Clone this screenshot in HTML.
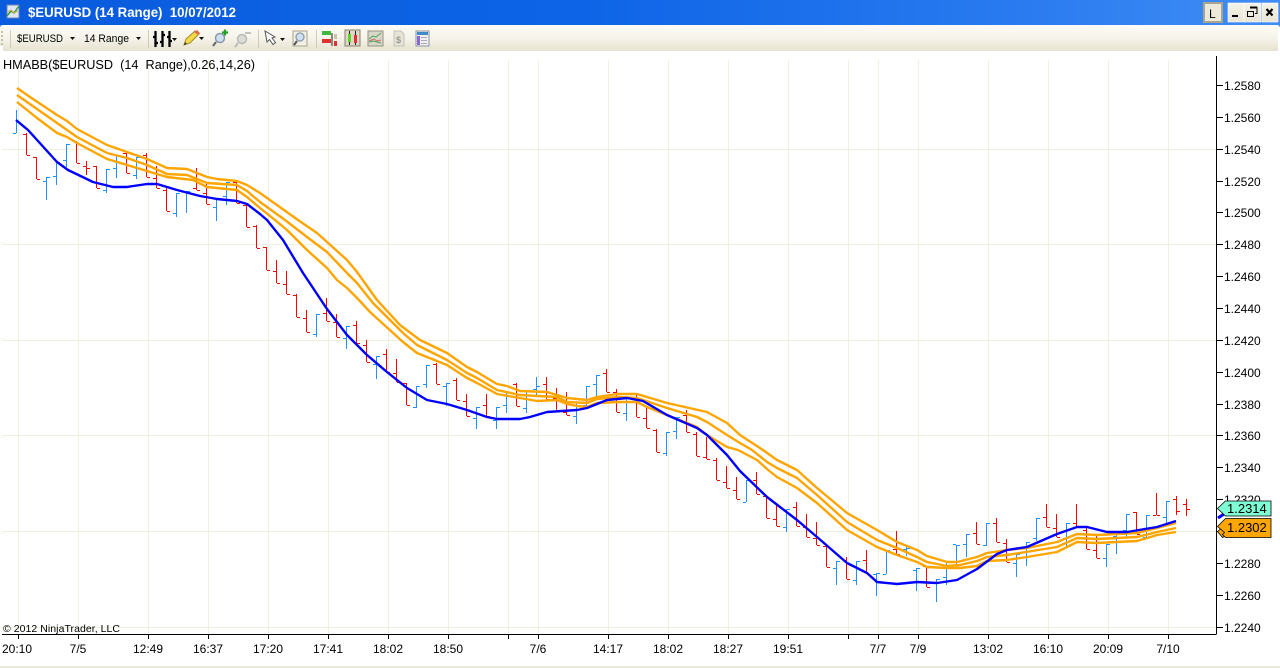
<!DOCTYPE html>
<html><head><meta charset="utf-8"><style>
html,body{margin:0;padding:0;background:#fff;width:1280px;height:668px;overflow:hidden}
svg{display:block;font-family:"Liberation Sans",sans-serif}
text{white-space:pre}
</style></head><body>
<svg width="1280" height="668" viewBox="0 0 1280 668" xmlns="http://www.w3.org/2000/svg">
<defs>
<linearGradient id="tb" x1="0" x2="1" y1="0" y2="0"><stop offset="0" stop-color="#0a5bdd"/><stop offset=".45" stop-color="#0d64e6"/><stop offset=".8" stop-color="#2a7bf0"/><stop offset="1" stop-color="#3f8df5"/></linearGradient>
<linearGradient id="tool" x1="0" x2="0" y1="0" y2="1"><stop offset="0" stop-color="#fcfbf7"/><stop offset=".5" stop-color="#f6f4ea"/><stop offset="1" stop-color="#e6e2d0"/></linearGradient>
<linearGradient id="btn" x1="0" x2="0" y1="0" y2="1"><stop offset="0" stop-color="#f5f3e8"/><stop offset="1" stop-color="#e8e5d5"/></linearGradient>
</defs>
<rect width="1280" height="668" fill="#fff"/>
<rect width="1280" height="25" fill="url(#tb)"/>
<rect y="25" width="1280" height="26" fill="#3f8df5"/>
<rect x="0" y="25" width="1280" height="26" rx="3" fill="url(#tool)"/>
<rect x="0" y="46" width="3" height="5" fill="#fff"/>
<rect x="1278" y="27" width="2" height="24" fill="#fff"/>
<text x="28" y="17" font-size="13.500" font-weight="bold" fill="#fff" textLength="208" lengthAdjust="spacingAndGlyphs">$EURUSD (14 Range)  10/07/2012</text>
<!-- app icon -->
<rect x="7" y="5" width="12" height="13" fill="#dfe6f2" stroke="#6c85b5"/>
<path d="M7 16l4-5 3 2 5-7" fill="none" stroke="#3a9a4a" stroke-width="1.500"/>
<path d="M8 12l3-2 3 3 4-2" fill="none" stroke="#c9b040"/>
<!-- window buttons -->
<rect x="1204" y="3" width="18" height="19" fill="#ece9d8" stroke="#a8a490" stroke-width="2"/>
<text x="1209" y="18" font-size="12" fill="#000">L</text>
<rect x="1228" y="3" width="16" height="19" fill="url(#btn)" stroke="#fff" stroke-width=".6"/>
<rect x="1244" y="3" width="17" height="19" fill="url(#btn)" stroke="#fff" stroke-width=".6"/>
<rect x="1262" y="3" width="16" height="19" fill="url(#btn)" stroke="#fff" stroke-width=".6"/>
<rect x="1232" y="15" width="6" height="2" fill="#000"/>
<path d="M1250 7.500h7v6h-2M1247.500 11.500h6v5h-6z" fill="none" stroke="#000"/>
<path d="M1250 7.500h7" stroke="#000" stroke-width="2"/>
<path d="M1266.500 9l6 6.500M1272.500 9l-6 6.500" stroke="#000" stroke-width="2.200"/>
<!-- toolbar -->
<path d="M2 31v2M2 35v2M2 39v2M2 43v2" stroke="#c4c0ab" stroke-width="2"/>
<path d="M10.500 30v18M148.500 30v18M258.500 30v18M316.500 30v18" stroke="#cfcbb8"/>
<text x="17" y="42" font-size="11" fill="#000" textLength="46" lengthAdjust="spacingAndGlyphs">$EURUSD</text>
<path d="M70 37h5l-2.500 3z" fill="#111"/>
<text x="84" y="42" font-size="11" fill="#000" textLength="45" lengthAdjust="spacingAndGlyphs">14 Range</text>
<path d="M136 37h5l-2.500 3z" fill="#111"/>
<path d="M155.500 31v16M153 37h2M155 43h3M162.500 31v16M160 42h2M162 35h3M169.500 31v16M167 37h2M169 41h3" stroke="#000" stroke-width="2.300" fill="none"/>
<path d="M172 38h5l-2.500 3z" fill="#111"/>
<path d="M184 45l2-6 9-8 4 3-9 9z" fill="#f6d84a" stroke="#a08a20"/>
<path d="M184 45l1-3 2 2z" fill="#333"/><path d="M194 32l3-2 3 3-2 2z" fill="#e06a50"/>
<path d="M199 37h5l-2.500 3z" fill="#111"/>
<circle cx="220" cy="38" r="4.500" fill="#cfe0f2" stroke="#8a9aa8" stroke-width="1.500"/><path d="M216 42l-3 4" stroke="#666" stroke-width="2"/>
<path d="M222 32.500h6M225 29.500v6" stroke="#1fa21f" stroke-width="2.200"/>
<circle cx="242" cy="39" r="4.500" fill="#dcdcd4" stroke="#bbb" stroke-width="1.500"/><path d="M238 43l-3 4" stroke="#bbb" stroke-width="2"/>
<path d="M245 33h6" stroke="#c4c4bc" stroke-width="2"/>
<path d="M265 31l2 11 2.500-2.500 3.500 5 2.500-2-3.500-4.500 3-1z" fill="#fff" stroke="#555"/>
<path d="M280 38h5l-2.500 3z" fill="#111"/>
<rect x="293" y="31" width="14" height="15" fill="#f2f0e4" stroke="#a8a490"/>
<circle cx="300" cy="37" r="4" fill="#cfe0f2" stroke="#8a9aa8" stroke-width="1.300"/><path d="M297 41l-3 4" stroke="#555" stroke-width="2"/>
<rect x="322" y="31" width="9" height="4" fill="#3fb83f"/><rect x="322" y="39" width="9" height="4" fill="#e03030"/>
<rect x="331" y="33" width="2" height="13" fill="#8a8a7a"/><rect x="334" y="41" width="3" height="5" fill="#e03030"/><rect x="334" y="34" width="3" height="5" fill="#c8c4b0"/>
<rect x="345" y="30" width="15" height="16" fill="#ddd9c6" stroke="#85816e"/>
<path d="M349.500 31v14M355.500 31v14" stroke="#222"/><rect x="348" y="34" width="3" height="8" fill="#5fd02a"/><rect x="354" y="35" width="3" height="8" fill="#e63030"/>
<rect x="368" y="31" width="15" height="15" fill="#d8d6c8" stroke="#97937f"/>
<path d="M369 39l4-3 3 1 5-4M369 42l4-1 4 1 4 1" fill="none" stroke="#4aa65a"/><path d="M369 41l5-2 3 2 4-1" fill="none" stroke="#d06a6a"/>
<path d="M394 31h7l3 3v12h-10z" fill="#e6e4d8" stroke="#c4c2b4"/>
<text x="396" y="43" font-size="9" font-weight="bold" fill="#9c9a8c">$</text>
<rect x="416" y="31" width="13" height="15" fill="#f0f0ee" stroke="#8a93a5"/>
<rect x="417" y="32" width="11" height="3" fill="#3f8ac8"/><rect x="417" y="36" width="3" height="9" fill="#8a6ad0"/>
<path d="M421 37.500h6M421 40.500h6M421 43.500h6" stroke="#aab" />
<!-- grid -->
<g stroke="#f1efdf" fill="none" shape-rendering="crispEdges">
<path d="M2 149.500H1216M2 244.500H1216M2 340.500H1216M2 435.500H1216M2 531.500H1216M2 627.500H1216"/>
<path d="M18.500 60V634M78.500 60V634M148.500 60V634M208.500 60V634M268.500 60V634M328.500 60V634M388.500 60V634M448.500 60V634M508.500 60V634M538.500 60V634M608.500 60V634M668.500 60V634M728.500 60V634M788.500 60V634M848.500 60V634M878.500 60V634M918.500 60V634M988.500 60V634M1048.500 60V634M1108.500 60V634M1168.500 60V634"/>
</g>
<!-- red bars -->
<path fill="none" stroke="#ff0000" shape-rendering="crispEdges" d="M26.500 133V155M23 134.500h3M27 155.500h3M36.500 157V179M33 157.500h3M37 179.500h3M76.500 141V163M73 141.500h3M77 163.500h3M86.500 161V175M83 166.500h3M87 168.500h3M96.500 166V188M93 166.500h3M97 188.500h3M126.500 151V173M123 153.500h3M127 173.500h3M146.500 153V177M143 155.500h3M147 177.500h3M156.500 166V188M153 178.500h3M157 188.500h3M166.500 188V211M163 190.500h3M167 211.500h3M196.500 168V190M193 188.500h3M197 190.500h3M206.500 182V204M203 193.500h3M207 204.500h3M236.500 182V203M233 182.500h3M237 203.500h3M246.500 205V227M243 205.500h3M247 227.500h3M256.500 225V248M253 226.500h3M257 248.500h3M266.500 247V270M263 247.500h3M267 270.500h3M276.500 260V283M273 271.500h3M277 283.500h3M286.500 271V294M283 284.500h3M287 294.500h3M296.500 294V317M293 295.500h3M297 317.500h3M306.500 310V332M303 318.500h3M307 332.500h3M326.500 298V321M323 313.500h3M327 321.500h3M336.500 314V337M333 322.500h3M337 337.500h3M356.500 321V343M353 325.500h3M357 343.500h3M366.500 340V362M363 345.500h3M367 362.500h3M386.500 349V372M383 354.500h3M387 372.500h3M396.500 359V382M393 373.500h3M397 382.500h3M406.500 383V405M403 383.500h3M407 405.500h3M436.500 363V384M433 364.500h3M437 384.500h3M456.500 378V400M453 380.500h3M457 400.500h3M466.500 394V416M463 401.500h3M467 416.500h3M486.500 394V416M483 405.500h3M487 416.500h3M516.500 383V406M513 384.500h3M517 406.500h3M546.500 377V399M543 384.500h3M547 399.500h3M556.500 388V411M553 398.500h3M557 411.500h3M566.500 392V415M563 412.500h3M567 415.500h3M606.500 369V392M603 373.500h3M607 392.500h3M616.500 389V412M613 392.500h3M617 412.500h3M636.500 394V417M633 398.500h3M637 417.500h3M646.500 406V428M643 418.500h3M647 428.500h3M656.500 429V452M653 430.500h3M657 452.500h3M686.500 410V432M683 415.500h3M687 432.500h3M696.500 432V456M693 434.500h3M697 456.500h3M706.500 437V459M703 457.500h3M707 459.500h3M716.500 458V480M713 460.500h3M717 480.500h3M726.500 466V488M723 482.500h3M727 488.500h3M736.500 477V499M733 490.500h3M737 499.500h3M756.500 472V494M753 480.500h3M757 494.500h3M766.500 496V518M763 496.500h3M767 518.500h3M776.500 503V526M773 519.500h3M777 526.500h3M796.500 502V526M793 507.500h3M797 526.500h3M806.500 514V537M803 527.500h3M807 537.500h3M816.500 522V545M813 538.500h3M817 545.500h3M826.500 545V567M823 546.500h3M827 567.500h3M846.500 557V579M843 560.500h3M847 579.500h3M866.500 550V574M863 560.500h3M867 574.500h3M896.500 531V554M893 549.500h3M897 554.500h3M926.500 566V587M923 566.500h3M927 587.500h3M976.500 522V544M973 533.500h3M977 544.500h3M996.500 518V542M993 523.500h3M997 542.500h3M1006.500 539V562M1003 543.500h3M1007 562.500h3M1046.500 504V527M1043 517.500h3M1047 527.500h3M1056.500 514V537M1053 528.500h3M1057 537.500h3M1076.500 504V527M1073 523.500h3M1077 527.500h3M1086.500 528V549M1083 530.500h3M1087 549.500h3M1096.500 534V558M1093 550.500h3M1097 558.500h3M1136.500 512V534M1133 512.500h3M1137 534.500h3M1156.500 493V515M1153 515.500h3M1157 515.500h3M1176.500 496V515M1173 499.500h3M1177 511.500h3M1186.500 499V516M1183 504.500h3M1187 509.500h3"/>
<!-- blue bars -->
<path fill="none" stroke="#1e90ff" shape-rendering="crispEdges" d="M16.500 110V133M13 133.500h3M46.500 177V200M43 181.500h3M47 177.500h3M56.500 162V185M53 176.500h3M57 162.500h3M66.500 144V167M63 160.500h3M67 144.500h3M106.500 169V193M103 190.500h3M107 169.500h3M116.500 155V178M113 168.500h3M117 155.500h3M136.500 157V179M133 175.500h3M137 157.500h3M176.500 193V217M173 213.500h3M177 193.500h3M186.500 191V213M183 191.500h3M187 191.500h3M216.500 198V221M213 207.500h3M217 198.500h3M226.500 182V205M223 196.500h3M227 182.500h3M316.500 314V337M313 334.500h3M317 314.500h3M346.500 326V349M343 338.500h3M347 326.500h3M376.500 356V379M373 364.500h3M377 356.500h3M416.500 386V408M413 407.500h3M417 386.500h3M426.500 365V388M423 384.500h3M427 365.500h3M446.500 383V406M443 386.500h3M447 383.500h3M476.500 407V429M473 418.500h3M477 407.500h3M496.500 407V429M493 420.500h3M497 407.500h3M506.500 392V413M503 405.500h3M507 392.500h3M526.500 391V413M523 408.500h3M527 391.500h3M536.500 377V397M533 389.500h3M537 386.500h3M576.500 402V424M573 416.500h3M577 402.500h3M586.500 386V408M583 405.500h3M587 386.500h3M596.500 375V397M593 384.500h3M597 375.500h3M626.500 398V421M623 413.500h3M627 398.500h3M666.500 432V456M663 453.500h3M667 432.500h3M676.500 417V439M673 431.500h3M677 417.500h3M746.500 480V502M743 502.500h3M747 480.500h3M786.500 509V532M783 527.500h3M787 509.500h3M836.500 561V585M833 568.500h3M837 561.500h3M856.500 561V585M853 580.500h3M857 561.500h3M876.500 573V596M873 574.500h3M877 573.500h3M886.500 550V574M883 574.500h3M887 550.500h3M906.500 547V556M903 549.500h3M907 548.500h3M916.500 568V591M913 570.500h3M917 568.500h3M936.500 579V602M933 583.500h3M937 579.500h3M946.500 562V585M943 577.500h3M947 562.500h3M956.500 545V568M953 544.500h3M957 545.500h3M966.500 534V557M963 544.500h3M967 534.500h3M986.500 523V546M983 545.500h3M987 523.500h3M1016.500 554V577M1013 563.500h3M1017 554.500h3M1026.500 542V566M1023 552.500h3M1027 542.500h3M1036.500 518V541M1033 538.500h3M1037 518.500h3M1066.500 523V546M1063 538.500h3M1067 523.500h3M1106.500 544V567M1103 558.500h3M1107 544.500h3M1116.500 531V554M1113 536.500h3M1117 531.500h3M1126.500 514V537M1123 530.500h3M1127 514.500h3M1146.500 515V537M1143 537.500h3M1147 515.500h3M1166.500 501V523M1163 517.500h3M1167 501.500h3"/>
<!-- orange bands -->
<g fill="none" stroke="#ffa500" stroke-width="2.400" stroke-linejoin="round">
<polyline points="17,88 30,97 57,115 67,121 77,129 107,145 127,152 147,159 167,168 187,169 207,177 217,179 237,181 247,185 260,193 298,220 317,233 347,260 357,272 377,300 400,325 420,340 447,353 467,367 477,372 497,384 507,386 520,391 547,392 567,398 587,400 597,397 617,394 637,394 667,403 707,412 727,423 740,435 763,450 777,460 797,470 817,488 847,513 877,530 897,542 917,550 927,556 947,562 957,562 977,557 987,553 1007,550 1027,548 1057,542 1077,534 1097,535 1137,533 1157,528 1176,523"/>
<polyline points="17,95 57,123 77,137 107,153 127,158 147,165 167,174 187,175 207,183 237,185 247,191 260,202 285,220 307,237 327,252 347,273 357,283 373,303 403,333 417,345 447,360 467,373 477,378 497,390 520,395 537,396 557,397 567,402 587,403 597,399 617,397 637,398 667,408 697,417 707,422 727,435 740,443 752,450 767,462 777,468 797,478 817,495 847,522 877,540 897,548 917,557 927,562 947,566 960,565 977,561 987,557 1007,555 1057,547 1077,538 1097,539 1137,537 1157,532 1176,528"/>
<polyline points="17,102 37,118 57,133 67,137 77,143 107,159 147,171 167,177 193,180 207,187 237,190 247,197 260,208 275,220 287,230 307,250 327,268 337,280 347,288 357,298 370,312 403,342 417,353 447,365 467,378 477,383 497,394 520,398 537,401 557,400 567,404 577,406 587,407 597,403 617,402 637,402 647,407 667,415 697,427 707,435 727,447 738,450 757,460 767,469 777,477 797,488 817,503 847,530 877,547 897,555 917,562 927,567 947,568 960,568 977,566 987,561 1007,560 1027,557 1057,552 1077,542 1097,543 1137,541 1157,535 1176,532"/>
</g>
<polyline fill="none" stroke="#0000ff" stroke-width="2.400" stroke-linejoin="round" points="16,120 28,130 57,162 68,170 93,182 113,187 127,187 147,184 157,184 177,190 200,196 217,199 237,201 247,204 260,214 267,220 283,240 303,273 327,309 347,335 367,355 387,372 407,388 427,400 447,404 467,410 487,417 497,419 520,419 530,417 547,412 577,410 587,408 607,400 627,398 643,401 667,415 697,428 707,435 727,455 740,471 767,497 797,520 817,537 847,563 867,573 877,582 897,584 917,582 937,583 957,580 977,569 997,554 1007,550 1027,547 1057,534 1077,527 1087,527 1107,532 1127,532 1157,527 1176,521"/>
<!-- axes -->
<g stroke="#000" fill="none" shape-rendering="crispEdges">
<path d="M2 634.500H1216.500M1216.500 56V634"/>
<path d="M1217 85.500h6M1217 117.500h6M1217 149.500h6M1217 181.500h6M1217 212.500h6M1217 244.500h6M1217 276.500h6M1217 308.500h6M1217 340.500h6M1217 372.500h6M1217 404.500h6M1217 435.500h6M1217 467.500h6M1217 499.500h6M1217 531.500h6M1217 563.500h6M1217 595.500h6M1217 627.500h6"/>
<path d="M18.500 635v4M78.500 635v4M148.500 635v4M208.500 635v4M268.500 635v4M328.500 635v4M388.500 635v4M448.500 635v4M508.500 635v4M538.500 635v4M608.500 635v4M668.500 635v4M728.500 635v4M788.500 635v4M848.500 635v4M878.500 635v4M918.500 635v4M988.500 635v4M1048.500 635v4M1108.500 635v4M1168.500 635v4"/>
</g>
<g font-size="12" fill="#000">
<text x="1224" y="90">1.2580</text><text x="1224" y="122">1.2560</text><text x="1224" y="154">1.2540</text><text x="1224" y="186">1.2520</text><text x="1224" y="217">1.2500</text><text x="1224" y="249">1.2480</text><text x="1224" y="281">1.2460</text><text x="1224" y="313">1.2440</text><text x="1224" y="345">1.2420</text><text x="1224" y="377">1.2400</text><text x="1224" y="409">1.2380</text><text x="1224" y="440">1.2360</text><text x="1224" y="472">1.2340</text><text x="1224" y="504">1.2320</text><text x="1224" y="568">1.2280</text><text x="1224" y="600">1.2260</text><text x="1224" y="632">1.2240</text>
</g>
<g font-size="12" fill="#000" text-anchor="middle">
<text x="17" y="653">20:10</text><text x="78" y="653">7/5</text><text x="148" y="653">12:49</text><text x="208" y="653">16:37</text><text x="268" y="653">17:20</text><text x="328" y="653">17:41</text><text x="388" y="653">18:02</text><text x="448" y="653">18:50</text><text x="538" y="653">7/6</text><text x="608" y="653">14:17</text><text x="668" y="653">18:02</text><text x="728" y="653">18:27</text><text x="788" y="653">19:51</text><text x="878" y="653">7/7</text><text x="918" y="653">7/9</text><text x="988" y="653">13:02</text><text x="1048" y="653">16:10</text><text x="1108" y="653">20:09</text><text x="1168" y="653">7/10</text>
</g>
<text x="3" y="69" font-size="12.700" fill="#000" textLength="252">HMABB($EURUSD  (14  Range),0.26,14,26)</text>
<text x="3" y="632" font-size="10.500" fill="#000" textLength="117">© 2012 NinjaTrader, LLC</text>
<!-- price markers -->
<path d="M1218 518l6-4" stroke="#0000ff" stroke-width="3"/>
<path d="M1217.500 531.500l6-5h10v10h-9l-2 1z" fill="#ffa500" stroke="#000" stroke-width=".8"/>
<path d="M1217.500 526.500l8-8h45.500v19h-45.500l-3-3 2-2z" fill="#ffa500" stroke="#000" stroke-width=".8"/>
<path d="M1217.500 508.500l8-7.500h45.500v15h-45.500z" fill="#7fffd4" stroke="#000" stroke-width=".8"/>
<text x="1227" y="513" font-size="13" fill="#000">1.2314</text>
<text x="1227" y="532" font-size="13" fill="#000">1.2302</text>
<!-- bottom strip -->
<rect x="0" y="666" width="1280" height="2" fill="#ece9d8"/>
</svg>
</body></html>
